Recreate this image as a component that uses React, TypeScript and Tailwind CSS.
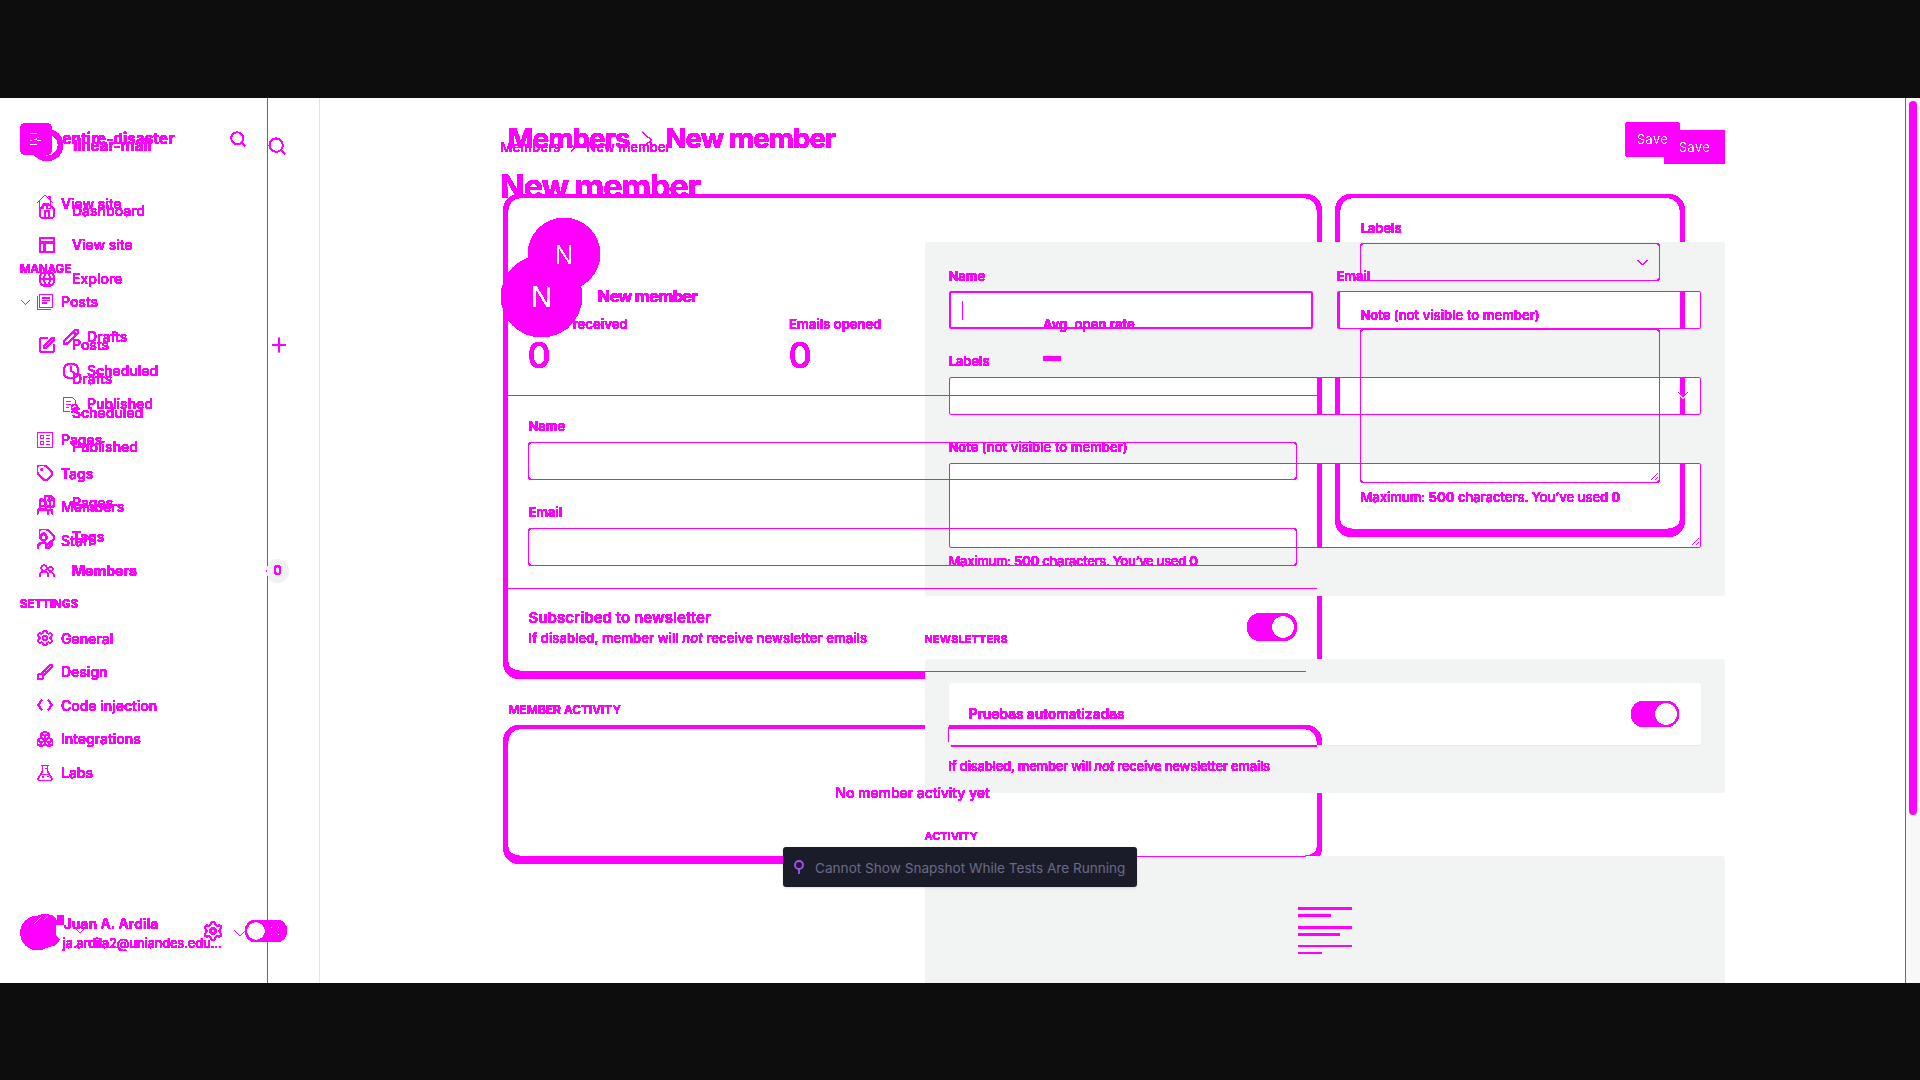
import React from "react";
import {
  House, Search, ChevronDown, ChevronRight, PanelsTopLeft, Globe, Pencil, Clock, Tag, Settings,
  Brush, Boxes, SquarePen, Plus, Users, UserPen, Files,
} from "lucide-react";

const M = "text-[#ff00ff]";
const CRISP = "[filter:url(#crisp)]";

/* Outlines of the three cards, in stage coordinates. */
function Frames() {
  const edge = "absolute border-[#ff00ff] border-x-[5px] border-t-[4px] border-b-[8px] rounded-[17px]";
  return (
    <div className={`absolute left-0 top-0 w-[1920px] h-[885px] ${CRISP}`}>
      <div className={`${edge} left-[503px] top-[96px] w-[819px] h-[485px]`} />
      <div className={`${edge} left-[1335px] top-[96px] w-[350px] h-[343px]`} />
      <div className={`${edge} left-[503px] top-[627px] w-[819px] h-[139px]`} />
    </div>
  );
}

function Grip() {
  return (
    <svg className="absolute right-[1px] bottom-[1px]" width="8" height="8" viewBox="0 0 8 8" stroke="#ff00ff" shapeRendering="crispEdges">
      <path d="M0.5 7.5L7.5 0.5M4.5 7.5L7.5 4.5" />
    </svg>
  );
}

const ic = { size: 16, strokeWidth: 1.5, viewBox: "1.5 1.5 21 21" };

const line = { width: 16, height: 16, viewBox: "0 0 16 16", fill: "none", stroke: "currentColor" };

function OldRow({ icon, text, sub, h = "h-[33.6px]", open }: { icon: React.ReactNode; text: string; sub?: boolean; h?: string; open?: boolean }) {
  return (
    <div className={`flex items-center shrink-0 ${h} ${sub ? "pl-[63px]" : "pl-[20px]"}`}>
      {!sub && <div className="w-[17px] shrink-0">{open && <svg width="11" height="7" viewBox="0 0 11 7" fill="none" stroke="currentColor"><path d="M1.500 1.500l4 4 4-4" /></svg>}</div>}
      {icon}
      <span className={`${sub ? "ml-[8px]" : "ml-[8px]"} ${h === "h-[33.6px]" ? "" : "-mt-[2px]"} text-[14px] font-medium`}>{text}</span>
    </div>
  );
}

function NewRow({ icon, text, bold, end }: { icon?: React.ReactNode; text: string; bold?: boolean; end?: React.ReactNode }) {
  return (
    <div className="flex items-center h-[34px] shrink-0 pl-[39px]">
      <div className={`w-[33px] ${CRISP}`}>{icon}</div>
      <span className={`${CRISP} -mt-[2px] text-[14px] ${bold ? "font-bold" : "font-medium"}`}>{text}</span>
      {end}
    </div>
  );
}

function OldSidebar() {
  return (
    <div className="w-[268px] h-full shrink-0 border-r border-[#ff00ff] flex flex-col">
      <div className="mt-[25px] h-[32px] pl-[20px] pr-[20px] flex items-center shrink-0">
        <svg width="32" height="32" viewBox="0 0 32 32" fill="none">
          <rect width="32" height="32" rx="6" fill="#ff00ff" />
          <path d="M10 10.500h7M19 14.500l-5 2h3M10 17.500h2M17 17.500h4M10 21.500h7" stroke="#fff" />
        </svg>
        <span className="ml-[10.500px] mt-px text-[15px] font-bold tracking-[0.2px]">entire-disaster</span>
        <Search size={18} strokeWidth={1.500} className="ml-auto" />
      </div>
      <div className="mt-[32px]"><OldRow h="h-[34px]" icon={<svg {...line} className="-mt-[4px]"><path d="M.5 8.500L8 1l7.500 7.500M2.500 7v7.500h3.500V10h4v4.500h3.500V7M11.500 2.500h1.500v3" /></svg>} text="View site" /></div>
      <div className="mt-[40px] h-[16px] leading-[16px] pl-[20px] text-[11.500px] font-semibold shrink-0">MANAGE</div>
      <div className="mt-[8px]"><OldRow h="h-[34px]" open icon={<svg {...line}><path d="M2.500 .5h13v13h-13zM.5 2.500v13h13M5 4h8M5 6.500h8M5 9h5" /></svg>} text="Posts" /></div>
      <div className="mt-px flex flex-col">
        <OldRow sub h="h-[34px]" icon={<Pencil {...ic} strokeWidth={2} />} text="Drafts" />
        <OldRow sub h="h-[34px]" icon={<Clock {...ic} strokeWidth={1.700} />} text="Scheduled" />
        <OldRow sub h="h-[33px]" icon={<svg {...line}><path d="M6.500 14.500h-6V.5h9l3 3v3M3 4.500h5M3 7.500h5M3 10.500h3" /><circle cx="11.500" cy="10.500" r="3" /><path d="M10 12.500l-1 3M13 12.500l1.500 2" /></svg>} text="Published" />
      </div>
      <div className="mt-[2px] flex flex-col">
        <OldRow icon={<svg {...line}><path d="M.5 .5h15v15h-15zM3.500 3.500h3v3h-3zM3.500 9.500h3v3h-3zM9 3.500h4M9 6.500h4M9 9.500h4M9 12.500h4" /></svg>} text="Pages" />
        <OldRow icon={<Tag {...ic} strokeWidth={1.700} />} text="Tags" />
        <OldRow icon={<Users {...ic} strokeWidth={2} />} text="Members" />
        <OldRow icon={<UserPen {...ic} strokeWidth={2} />} text="Staff" />
      </div>
      <div className="mt-[39px] h-[16px] leading-[16px] pl-[20px] text-[11.500px] font-bold shrink-0">SETTINGS</div>
      <div className="mt-[9px] flex flex-col">
        <OldRow icon={<Settings {...ic} strokeWidth={1.400} />} text="General" />
        <OldRow icon={<Brush {...ic} strokeWidth={1.500} />} text="Design" />
        <OldRow icon={<svg {...line} strokeWidth="1.300"><path d="M5 3L1 8l4 5M11 3l4 5-4 5" /></svg>} text="Code injection" />
        <OldRow icon={<Boxes {...ic} strokeWidth={1.500} />} text="Integrations" />
        <OldRow icon={<svg {...line}><path d="M4.500 .5h7M5.500 .5v5.500L.8 14q0 1.500 1.500 1.500h11.400q1.500 0 1.500-1.500L10.500 6V.5M3.500 9.500h9M8 3.500h2M5.500 12h1M10 11.500h2" /></svg>} text="Labs" />
      </div>
      <div className="mt-auto mb-[28px] h-[44px] pl-[20px] flex items-center">
        <svg width="44" height="44" viewBox="0 0 44 44" className="shrink-0">
          <circle cx="17.500" cy="22" r="17" fill="#ff00ff" />
          <path d="M14 9C18 2 32 2 36 8l1 17 4 2-6 7-10 3z" fill="#ff00ff" />
          <path d="M37 4h9.500v9.500h-9.500z" fill="#ff00ff" />
          <path d="M14 13l7-7M24 9l4-4" stroke="#fff" strokeWidth="1.500" />
          <path d="M35.500 14.500h8v13l-3 2-5-6z" fill="#fff" />
        </svg>
        <div className="w-[157px] shrink-0">
          <div className="h-[20px] leading-[20px] text-[14px] tracking-[0.050px] -ml-[0.500px] font-semibold">Juan A. Ardila</div>
          <div className="h-[18px] leading-[18px] -ml-[1.500px] text-[13px] font-medium tracking-[-0.250px] whitespace-nowrap">ja.ardila2@uniandes.edu...</div>
        </div>
        <Settings size={20} viewBox="1 1 22 22" strokeWidth={1.500} className="-ml-[18px] -mt-[4px] shrink-0" />
        <svg width="14" height="9" viewBox="0 0 14 9" fill="none" stroke="currentColor" className="ml-[10px] shrink-0"><path d="M1.500 1.500l5.500 5.500 5.500-5.500" /></svg>
      </div>
    </div>
  );
}

function OldMain() {
  return (
    <div className="pl-[240px] w-[1460px] flex flex-col">
      <div className="mt-[24px] h-[35px] flex items-center w-[1172px] text-[27.500px] font-bold tracking-[-0.850px]">
        <span className="-mt-[2px]">Members</span>
        <svg width="12" height="18" viewBox="0 0 12 18" fill="none" stroke="currentColor" strokeWidth="0.800" className="ml-[12px] mr-[12px]"><path d="M1 1l9.500 8-9.500 8" /></svg>
        <span className="-mt-[2px]">New member</span>
        <div className="ml-auto w-[55px] h-[35px] rounded-[4px] bg-[#ff00ff] text-white text-[13px] font-medium tracking-[0.300px] flex items-center justify-center">Save</div>
      </div>
      <div className="mt-[41px] flex gap-[23px]">
        <div>
          <div className="w-[809px] h-[473px] flex flex-col">
            <div className="h-[197px] px-[20px] pt-[20px]">
              <div className="size-[72px] rounded-full bg-[#ff00ff] text-white text-[26px] font-normal flex items-center justify-center">N</div>
              <div className="mt-[25px] grid grid-cols-[261px_254px_1fr] text-[13px] font-semibold">
                {[["Emails received", "0"], ["Emails opened", "0"], ["Avg. open rate", "–"]].map(([k, v]) => (
                  <div key={k}>
                    <div className="h-[18px] leading-[18px] tracking-[0.060px]">{k}</div>
                    <div className={`h-[44px] leading-[44px] text-[36px] ${v === "–" ? "font-bold pt-[1px]" : "font-medium -ml-[0.500px]"}`}>{v}</div>
                  </div>
                ))}
              </div>
            </div>
            <div className="h-px bg-[#ff00ff] shrink-0" />
            <div className="h-[192px] px-[20px] text-[13px] font-semibold">
              <div className="mt-[21px] h-[18px] leading-[18px] pl-[0.500px]">Name</div>
              <div className="mt-[7px] w-[769px] h-[38px] border border-[#ff00ff] rounded-[3px]" />
              <div className="mt-[23px] h-[18px] leading-[18px] pl-[0.500px]">Email</div>
              <div className="mt-[7px] w-[769px] h-[38px] border border-[#ff00ff] rounded-[3px]" />
            </div>
            <div className="h-px bg-[#ff00ff] shrink-0" />
            <div className="flex-1 px-[20px] pt-[19px] flex justify-between">
              <div className="pl-[0.500px]">
                <div className="h-[20px] leading-[20px] text-[15px] font-semibold tracking-[0.060px]">Subscribed to newsletter</div>
                <div className="h-[18px] leading-[18px] mt-px text-[13px] font-medium tracking-[0.120px]">If disabled, member will <i>not</i> receive newsletter emails</div>
              </div>
              <div className="mt-[5px] w-[50px] h-[28px] rounded-full bg-[#ff00ff] pr-[3px] flex items-center justify-end"><div className="size-[22px] rounded-full bg-white" /></div>
            </div>
          </div>
          <div className="mt-[30px] h-[18px] leading-[18px] text-[12px] font-semibold pl-[0.500px]">MEMBER ACTIVITY</div>
          <div className="mt-[10px] h-[127px] flex items-center justify-center text-[14px] font-medium tracking-[-0.050px]">No member activity yet</div>
        </div>
        <div className="pt-[21px] pl-[20px] w-[340px] text-[13px] font-semibold">
          <div className="h-[18px] leading-[18px] pl-[0.500px]">Labels</div>
          <div className="mt-[6px] w-[300px] h-[38px] border border-[#ff00ff] rounded-[3px] flex items-center justify-end pr-[10px]"><svg width="13" height="8" viewBox="0 0 13 8" fill="none" stroke="currentColor" className="mt-px"><path d="M1.500 1l5 5 5-5" /></svg></div>
          <div className="mt-[25px] h-[18px] leading-[18px] pl-[0.500px]">Note <span className="font-medium tracking-[0.100px]">(not visible to member)</span></div>
          <div className="relative mt-[5px] w-[300px] h-[154px] border border-[#ff00ff] rounded-[3px]"><Grip /></div>
          <div className="mt-[5px] h-[18px] leading-[18px] pl-[0.500px] font-medium whitespace-nowrap">Maximum: <b>500</b> characters. You’ve used <b>0</b></div>
        </div>
      </div>
    </div>
  );
}

function NewSidebar() {
  return (
    <div className="w-[320px] h-full shrink-0 border-r border-[#e5e5e5] flex flex-col">
      <div className="mt-[31px] h-[32px] pl-[31px] pr-[32px] flex items-center shrink-0">
        <div className={`size-[32px] rounded-full border-[5px] border-[#ff00ff] ${CRISP}`} />
        <span className={`ml-[10px] mt-[2px] text-[15px] font-bold ${CRISP}`}>linear-mail</span>
        <Search size={20} strokeWidth={1.600} className={`ml-auto mt-[2px] ${CRISP}`} />
      </div>
      <div className="mt-[33px]">
        <NewRow icon={<House {...ic} />} text="Dashboard" />
        <NewRow icon={<PanelsTopLeft size={16} viewBox="2.500 2.500 19 19" strokeWidth={1.700} />} text="View site" />
        <NewRow icon={<Globe {...ic} strokeWidth={1.500} />} text="Explore" />
      </div>
      <div className="mt-[32px]">
        <NewRow icon={<SquarePen {...ic} strokeWidth={1.800} />} text="Posts" end={<Plus size={22} strokeWidth={1.600} className={`ml-auto mr-[29px] ${CRISP}`} />} />
        <NewRow text="Drafts" />
        <NewRow text="Scheduled" />
        <NewRow text="Published" />
      </div>
      <div className="mt-[22px]">
        <NewRow icon={<Files {...ic} strokeWidth={2} />} text="Pages" />
        <NewRow icon={<Tag {...ic} strokeWidth={1.700} />} text="Tags" />
        <NewRow bold icon={<svg {...line}><circle cx="5" cy="5" r="2.800" /><circle cx="11.500" cy="6" r="2.300" /><path d="M.7 13.500q0-5 4.300-5t4.300 5M10 9.500q5-1.500 5.300 4" /></svg>} text="Members" end={
          <div className="ml-auto mr-[30px] w-[23px] h-[24px] rounded-full bg-[#eff1f2] flex items-center justify-center"><span className={`text-[12.500px] font-semibold ${CRISP}`}>0</span></div>
        } />
      </div>
      <div className="mt-auto mb-[41px] h-[22px] pl-[74px] pr-[32px] flex items-center justify-between">
        <svg width="12" height="8" viewBox="0 0 12 8" fill="none" stroke="currentColor" className={CRISP}><path d="M1.500 1.500L6 6l4.500-4.500" /></svg>
        <div className={`w-[42px] h-[22px] rounded-full bg-[#ff00ff] pl-[2px] pr-[8px] flex items-center justify-between ${CRISP}`}>
          <div className="size-[18px] rounded-full bg-white" />
          <svg width="8" height="8" viewBox="0 0 8 8" fill="#fff"><path d="M0 0h1v1h-1zM7 0h1v1h-1zM0 7h1v1h-1zM7 7h1v1h-1z" /></svg>
        </div>
      </div>
    </div>
  );
}

function NewMain() {
  const lbl = `block w-max h-[18px] leading-[18px] -ml-[0.500px] ${CRISP}`;
  const box = "relative overflow-hidden bg-white border border-[#ff00ff] rounded-[2px]";
  const cap = `block w-max h-[16px] leading-[16px] text-[11px] font-semibold -ml-[0.500px] ${CRISP}`;
  return (
    <div className="pl-[181px] w-[1585px] flex flex-col">
      <div className="mt-[32px] h-[34px] w-[1224px] flex items-center justify-between shrink-0">
        <div className={`-ml-[0.500px] mt-[2px] flex items-center text-[13px] tracking-[0.250px] ${CRISP}`}>Members<ChevronRight size={14} strokeWidth={1.300} className="mx-[6px]" />New member</div>
        <div className={`w-[61px] rounded-[3px] h-[34px] pt-[2px] bg-[#ff00ff] text-white text-[13px] font-medium tracking-[0.300px] flex items-center justify-center ${CRISP}`}>Save</div>
      </div>
      <div className={`w-max mt-[3px] h-[40px] leading-[40px] text-[32.500px] font-bold -ml-px -tracking-[1.100px] ${CRISP}`}>New member</div>
      <div className="mt-[35px] flex">
        <div className="w-[424px] pt-[14px]">
          <div className={`flex items-center w-max ${CRISP}`}>
            <div className="size-[81px] rounded-full bg-[#ff00ff] text-white text-[28px] font-medium flex items-center justify-center">N</div>
            <div className="ml-[15.500px] -mt-px text-[16.500px] font-bold -tracking-[0.700px]">New member</div>
          </div>
        </div>
        <div className="w-[800px]">
          <div className="h-[354px] rounded-[3px] bg-[#f2f4f4] px-[24px] pt-[25px] text-[13px]">
            <div className="flex gap-[24px]">
              <div className="w-[364px]">
                <span className={`${lbl} font-semibold`}>Name</span>
                <div className="mt-[6px] h-[38px] bg-white border-2 border-[#ff00ff] rounded-[2px] flex items-center pl-[11px]"><div className="w-px h-[19px] bg-[#ff00ff]" /></div>
              </div>
              <div className="w-[364px]">
                <span className={`${lbl} font-semibold`}>Email</span>
                <div className={`${box} border-l-[3px] mt-[6px] h-[38px]`}><div className="absolute left-[-1340px] top-[-194px]"><Frames /></div></div>
              </div>
            </div>
            <span className={`${lbl} font-semibold mt-[23px]`}>Labels</span>
            <div className={`${box} mt-[7px] h-[38px] flex items-center justify-end`}>
              <div className="absolute left-[-950px] top-[-280px]"><Frames /></div>
              <svg width="12" height="8" viewBox="0 0 12 8" fill="none" className="relative mr-[11px] -mt-[2px]"><path d="M1 2l5 5 5-5" stroke="#fff" strokeWidth="2" /><path d="M1 1l5 5 5-5" stroke="#ff00ff" /></svg>
            </div>
            <span className={`${lbl} font-semibold mt-[23px]`}>Note <span className="font-medium tracking-[0.100px]">(not visible to member)</span></span>
            <div className={`${box} mt-[7px] h-[85px]`}>
              <div className="absolute left-[-950px] top-[-366px]"><Frames /></div>
              <Grip />
            </div>
            <span className={`${lbl} font-medium mt-[4px] tracking-[-0.280px]`}>Maximum: <b>500</b> characters. You’ve used <b>0</b></span>
          </div>
          <span className={`${cap} mt-[35px] tracking-[0.150px]`}>NEWSLETTERS</span>
          <div className="mt-[12px] h-[134px] rounded-[3px] bg-[#f2f4f4] p-[24px]">
            <div className="relative h-[62px] bg-white rounded-[3px] shadow-xs flex items-center justify-between pl-[19.500px] pr-[22px]">
              <div className="absolute inset-0 overflow-hidden"><div className="absolute left-[-949px] top-[-585px]"><Frames /></div></div>
              <div className="absolute -left-px top-[44px] w-px h-[15px] bg-[#ff00ff]" />
              <span className={`relative -mt-[2px] text-[14px] font-semibold tracking-[-0.150px] ${CRISP}`}>Pruebas automatizadas</span>
              <div className={`relative w-[48px] h-[26px] rounded-full bg-[#ff00ff] pr-[2px] flex items-center justify-end ${CRISP}`}><div className="size-[22px] rounded-full bg-white" /></div>
            </div>
            <div className="ml-[2px] w-[366px] h-[2px] bg-[#ff00ff]" />
            <span className={`${lbl} font-medium mt-[10px] text-[13px] tracking-[-0.200px]`}>If disabled, member will <i>not</i> receive newsletter emails</span>
          </div>
          <span className={`${cap} mt-[35px] tracking-[0.100px]`}>ACTIVITY</span>
          <div className="mt-[12px] h-[127px] rounded-t-[3px] bg-[#f2f4f4] pt-[51px] pl-[373px]">
            <div className="w-[54px] h-[3px] bg-[#ff00ff]" />
            <div className="mt-[4px] w-[33px] h-[3px] bg-[#ff00ff]" />
            <div className="mt-[9px] w-[54px] h-[3px] bg-[#ff00ff]" />
            <div className="mt-[4px] w-[42px] h-[3px] bg-[#ff00ff]" />
            <div className="mt-[9px] w-[54px] h-[2px] bg-[#ff00ff]" />
            <div className="mt-[5px] w-[24px] h-[2px] bg-[#ff00ff]" />
          </div>
        </div>
      </div>
    </div>
  );
}

export default function App() {
  return (
    <div className={`w-[1920px] h-[1080px] bg-[#0d0d0d] pt-[98px] pb-[97px] overflow-hidden font-[Inter,sans-serif] ${M}`}>
      <svg className="absolute" width="0" height="0">
        <filter id="crisp" x="-5%" y="-5%" width="110%" height="110%" colorInterpolationFilters="sRGB">
          <feComponentTransfer>
            <feFuncG type="linear" slope="20" intercept="-13" />
            <feFuncA type="linear" slope="30" intercept="-1.5" />
          </feComponentTransfer>
        </filter>
      </svg>
      <div className="relative w-[1920px] h-[885px] bg-white overflow-hidden">
        <Frames />
        <div className="absolute inset-0 flex">
          <NewSidebar />
          <NewMain />
          <div className="w-[15px] h-full border-l border-[#ff00ff] bg-[#f8f8f8] flex justify-center pt-[3px]">
            <div className="w-[8px] h-[714px] rounded-full bg-[#ff00ff]" />
          </div>
        </div>
        <div className={`absolute inset-0 flex ${CRISP}`}>
          <OldSidebar />
          <OldMain />
        </div>
        <div className="absolute left-[267px] top-[468px] w-px h-[10px] bg-[#eff1f2]" />
        <div className="absolute left-[266px] top-[472px] w-px h-[2px] bg-[#ff00ff]" />
        <div className="absolute left-[925px] top-[573px] w-[381px] h-px bg-[#ff00ff]" />
        <div className="absolute left-[925px] top-[758px] w-[381px] h-px bg-[#ff00ff]" />
        <div className="absolute left-[783px] top-[749px] w-[354px] h-[40px] rounded-[3px] bg-[#1b1c29] shadow flex items-center pl-[11px] text-[13.600px] text-[#6a6b88] whitespace-nowrap">
          <svg width="10" height="14" viewBox="0 0 10 14" fill="none" stroke="#a259e8" strokeWidth="1.800" className="-mt-px mr-[11px]"><circle cx="5" cy="5" r="4" fill="#2b1145" /><path d="M5 9v5" /></svg>
          <span className="mt-[2px]">Cannot Show Snapshot While Tests Are Running</span>
        </div>
      </div>
    </div>
  );
}
